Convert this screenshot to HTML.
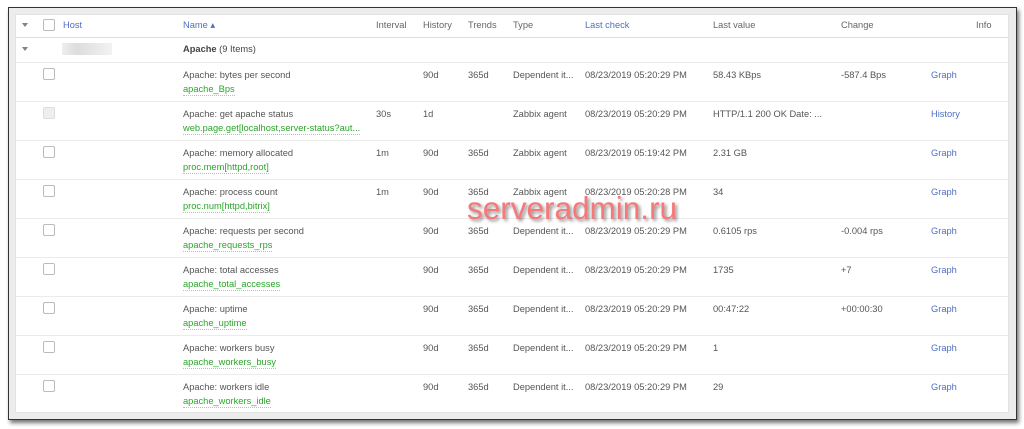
<!DOCTYPE html>
<html><head><meta charset="utf-8"><style>
*{margin:0;padding:0;box-sizing:border-box}
body{width:1024px;height:429px;background:#fff;font-family:"Liberation Sans",Arial,sans-serif;font-size:9.3px;color:#555;position:relative;overflow:hidden}
.frame{position:absolute;left:8px;top:7px;width:1009px;height:413px;border:1px solid #333;background:#ececec;box-shadow:2px 3px 4px rgba(0,0,0,.55)}
.panel{position:absolute;left:15px;top:14px;width:994px;height:399px;background:#fff;border:1px solid #e2e2e2}
.t{position:absolute;white-space:nowrap;line-height:11px}
.hd{color:#666}
.lnk{color:#4f6fc4}
.g{color:#2aa52a;border-bottom:1px dotted #9ad49a}
.line{position:absolute;left:16px;width:992px;height:1px;background:#ebebeb}
.cb{position:absolute;width:12px;height:12px;border:1px solid #bbb;border-radius:2px;background:#fff}
.arr{position:absolute;width:0;height:0;border-left:3px solid transparent;border-right:3px solid transparent;border-top:4px solid #7a8590}
.wm{position:absolute;left:467px;top:190px;font-size:31.5px;color:#f47a7a;text-shadow:2px 2px 3px rgba(0,0,0,.45);font-family:"Liberation Sans",sans-serif;line-height:36px}
</style></head><body>
<div class="frame"></div>
<div class="panel"></div>
<div class="line" style="top:37px;background:#ddd"></div>
<div class="arr" style="left:22px;top:23px"></div>
<div class="cb" style="left:43px;top:19px"></div>
<div class="t lnk" style="left:63px;top:20px">Host</div>
<div class="t lnk" style="left:183px;top:20px">Name ▴</div>
<div class="t hd" style="left:376px;top:20px">Interval</div>
<div class="t hd" style="left:423px;top:20px">History</div>
<div class="t hd" style="left:468px;top:20px">Trends</div>
<div class="t hd" style="left:513px;top:20px">Type</div>
<div class="t lnk" style="left:585px;top:20px">Last check</div>
<div class="t hd" style="left:713px;top:20px">Last value</div>
<div class="t hd" style="left:841px;top:20px">Change</div>
<div class="t hd" style="left:976px;top:20px">Info</div>

<div class="arr" style="left:22px;top:47px"></div>
<div style="position:absolute;left:62px;top:43px;width:50px;height:12px;background:linear-gradient(90deg,#eee,#ddd 30%,#e6e6e6 60%,#f2f2f2)"></div>
<div class="t" style="left:183px;top:44px;color:#444"><b>Apache</b> (9 Items)</div>
<div class="line" style="top:62px"></div>

<div id="rows"></div>
<div class="wm">serveradmin.ru</div>
<script>
var d=[
["Apache: bytes per second","apache_Bps","","90d","365d","Dependent it...","08/23/2019 05:20:29 PM","58.43 KBps","-587.4 Bps","Graph",0],
["Apache: get apache status","web.page.get[localhost,server-status?aut...","30s","1d","","Zabbix agent","08/23/2019 05:20:29 PM","HTTP/1.1 200 OK Date: ...","","History",1],
["Apache: memory allocated","proc.mem[httpd,root]","1m","90d","365d","Zabbix agent","08/23/2019 05:19:42 PM","2.31 GB","","Graph",0],
["Apache: process count","proc.num[httpd,bitrix]","1m","90d","365d","Zabbix agent","08/23/2019 05:20:28 PM","34","","Graph",0],
["Apache: requests per second","apache_requests_rps","","90d","365d","Dependent it...","08/23/2019 05:20:29 PM","0.6105 rps","-0.004 rps","Graph",0],
["Apache: total accesses","apache_total_accesses","","90d","365d","Dependent it...","08/23/2019 05:20:29 PM","1735","+7","Graph",0],
["Apache: uptime","apache_uptime","","90d","365d","Dependent it...","08/23/2019 05:20:29 PM","00:47:22","+00:00:30","Graph",0],
["Apache: workers busy","apache_workers_busy","","90d","365d","Dependent it...","08/23/2019 05:20:29 PM","1","","Graph",0],
["Apache: workers idle","apache_workers_idle","","90d","365d","Dependent it...","08/23/2019 05:20:29 PM","29","","Graph",0]];
var h="";
d.forEach(function(r,i){var y=62+39*i,ty=y+8;
h+='<div class="cb" style="left:43px;top:'+(y+6)+'px;'+(r[10]?'background:#eee;border-color:#ddd':'')+'"></div>';
h+='<div class="t" style="left:183px;top:'+ty+'px">'+r[0]+'</div>';
h+='<div class="t g" style="left:183px;top:'+(ty+14)+'px">'+r[1]+'</div>';
var xs=[376,423,468,513,585,713,841];
for(var k=0;k<7;k++)h+='<div class="t" style="left:'+xs[k]+'px;top:'+ty+'px">'+r[k+2]+'</div>';
h+='<div class="t lnk" style="left:931px;top:'+ty+'px">'+r[9]+'</div>';
if(i<8)h+='<div class="line" style="top:'+(y+39)+'px"></div>';
});
document.getElementById("rows").innerHTML=h;
</script>
</body></html>
